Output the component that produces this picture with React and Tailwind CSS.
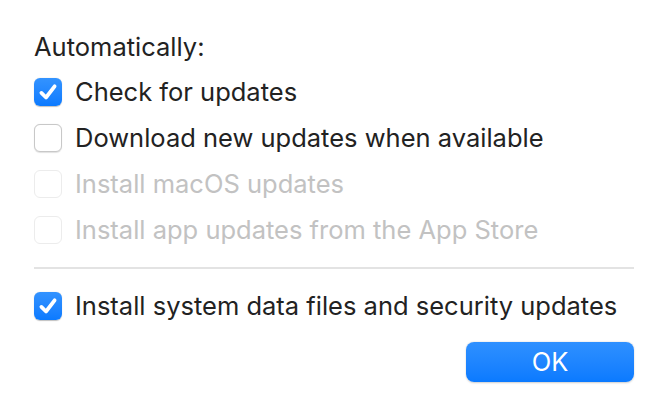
const rows = [
  { label: 'Check for updates', checked: true },
  { label: 'Download new updates when available', checked: false },
  { label: 'Install macOS updates', checked: false, disabled: true },
  { label: 'Install app updates from the App Store', checked: false, disabled: true },
];

const Box = ({ checked, disabled }) => {
  if (checked) {
    return (
      <span className="flex h-[28px] w-[28px] shrink-0 items-center justify-center rounded-[6px] bg-gradient-to-b from-[#3393ff] to-[#0a7aff] shadow-[0_0.5px_1px_rgba(0,0,0,0.25)]">
        <svg viewBox="0 0 20 20" className="h-[22px] w-[22px]" fill="none">
          <path d="M4 10.8 L8.2 15 L16 4.8" stroke="white" strokeWidth="3.4" strokeLinecap="round" strokeLinejoin="round" />
        </svg>
      </span>
    );
  }
  return (
    <span
      className={`h-[28px] w-[28px] shrink-0 rounded-[6px] border bg-white ${
        disabled ? 'border-[#ececec]' : 'border-[#c8c8c8] shadow-[0_0.5px_1px_rgba(0,0,0,0.12)]'
      }`}
    />
  );
};

const Row = ({ label, checked, disabled }) => (
  <div className="flex h-[46px] items-center gap-[13px]">
    <Box checked={checked} disabled={disabled} />
    <span className={`text-[25.5px] leading-none ${disabled ? 'text-[#c2c2c2]' : 'text-[#222222]'}`}>{label}</span>
  </div>
);

export default function App() {
  return (
    <div
      className="flex h-[414px] w-[666px] flex-col bg-white pl-[34px] pr-[32px] pt-[32px]"
      style={{ fontFamily: 'Inter, "Liberation Sans", sans-serif' }}
    >
      <p className="h-[30px] text-[25.5px] leading-[30px] text-[#222222]">Automatically:</p>
      <div className="mt-[7px] flex flex-col">
        {rows.map((r) => (
          <Row key={r.label} {...r} />
        ))}
      </div>
      <div className="mt-[14px] h-[2px] bg-[#e3e3e3]" />
      <div className="mt-[14px]">
        <Row label="Install system data files and security updates" checked />
      </div>
      <div className="mt-[13px] flex justify-end">
        <button className="h-[40px] w-[168px] rounded-[8px] bg-gradient-to-b from-[#2e90ff] to-[#0a7aff] text-[25.5px] text-white shadow-[0_0.5px_2px_rgba(0,0,0,0.2)]">
          OK
        </button>
      </div>
    </div>
  );
}
